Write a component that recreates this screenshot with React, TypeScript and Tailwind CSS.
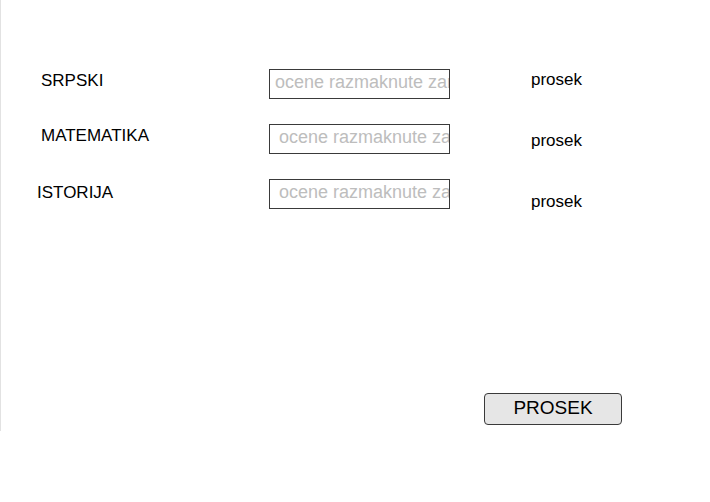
import React from "react";

const rows = [
  { label: "SRPSKI", labelPad: "pl-[40px]", labelMt: "mt-[3px]", inputPad: "pl-[5px]", prosekMt: "mt-[2px]" },
  { label: "MATEMATIKA", labelPad: "pl-[40px]", labelMt: "mt-[3px]", inputPad: "pl-[9px]", prosekMt: "mt-[8px]" },
  { label: "ISTORIJA", labelPad: "pl-[36px]", labelMt: "mt-[5px]", inputPad: "pl-[9px]", prosekMt: "mt-[14px]" },
];

export default function App() {
  return (
    <div className="w-[710px] h-[502px] bg-white font-['Liberation_Sans',Arial,sans-serif] text-black">
      <div className="h-[431px] border-l border-[#e2e2e2] pt-[69px] flex flex-col">
        {rows.map((r) => (
          <div key={r.label} className="flex items-start h-[55px] shrink-0">
            <div className={`w-[268px] shrink-0 ${r.labelPad}`}>
              <div className={`${r.labelMt} text-[17px] leading-[17px]`}>{r.label}</div>
            </div>
            <input
              className={`w-[181px] h-[30px] shrink-0 border border-[#3a3a3a] bg-white ${r.inputPad} pr-0 pt-0 pb-[4px] text-[18px] font-['Liberation_Sans',Arial,sans-serif] placeholder:text-[#bdbdbd] outline-none`}
              placeholder="ocene razmaknute zarezom"
            />
            <div className={`ml-[81px] ${r.prosekMt} text-[17px] leading-[17px]`}>prosek</div>
          </div>
        ))}
        <div className="mt-[159px] pl-[483px] shrink-0">
          <button className="w-[138px] h-[32px] rounded-[4px] border border-[#3a3a3a] bg-[#e6e6e6] text-[19px] leading-[19px] pb-[3px] font-['Liberation_Sans',Arial,sans-serif] text-black">
            PROSEK
          </button>
        </div>
      </div>
    </div>
  );
}
